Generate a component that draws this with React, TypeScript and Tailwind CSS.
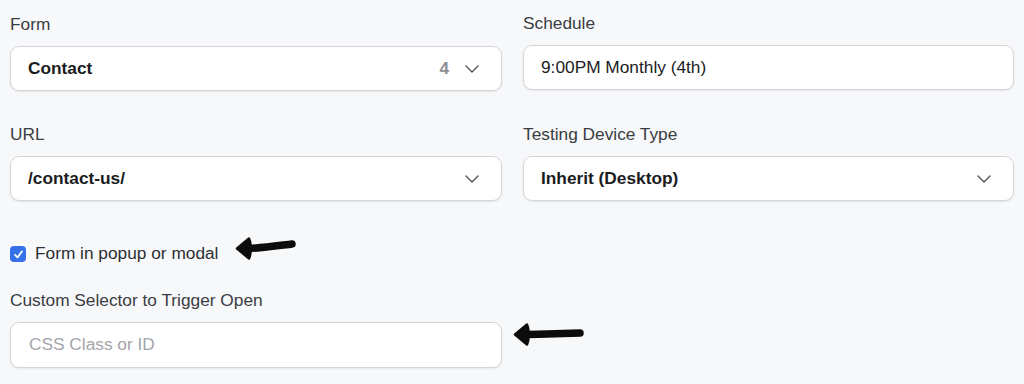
const font = { fontFamily: '"Liberation Sans", Arial, sans-serif' };

const Arrow = ({ width = 62, rise = 4 }: { width?: number; rise?: number }) => (
  <svg width={width} height="24" viewBox={`0 0 ${width} 24`} fill="none">
    <path
      d={`M13 12.5 C ${width * 0.45} 12, ${width * 0.75} ${12 - rise * 0.7}, ${width - 5} ${12 - rise}`}
      stroke="#0c0c0c"
      strokeWidth="7.5"
      strokeLinecap="round"
    />
    <path
      d="M2 12.5 L14 2.5 Q16 7 15.5 12.5 Q16 18 14 22.5 Z"
      fill="#0c0c0c"
      stroke="#0c0c0c"
      strokeWidth="2.5"
      strokeLinejoin="round"
    />
  </svg>
);

const Chevron = () => (
  <svg width="14" height="8" viewBox="0 0 14 8" fill="none">
    <path d="M1 1 L7 7 L13 1" stroke="#4a4c50" strokeWidth="1.3" strokeLinecap="round" strokeLinejoin="round" />
  </svg>
);

const Label = ({ children }: { children: React.ReactNode }) => (
  <div className="h-6 mb-[10px] text-[17.3px] leading-6 text-[#3a3d42]">{children}</div>
);

const SelectBox = ({
  value,
  count,
  bold = true,
  chevron = true,
}: {
  value: string;
  count?: string;
  bold?: boolean;
  chevron?: boolean;
}) => (
  <div className="h-[45px] flex items-center bg-white border border-[#d3d5d9] rounded-[9px] shadow-[0_1px_2px_rgba(0,0,0,0.08)] pl-[17px] pr-[22px]">
    <span className={`flex-1 text-[17.3px] text-[#1b1c1e] ${bold ? "font-bold" : ""}`}>{value}</span>
    {count && <span className="text-[17.3px] font-bold text-[#8e8f92] mr-[16px]">{count}</span>}
    {chevron && <Chevron />}
  </div>
);

export default function App() {
  return (
    <div className="w-[1024px] h-[384px] bg-[#f7f8fa] pt-3 px-[10px] overflow-hidden" style={font}>
      <div className="grid grid-cols-[492px_491px] gap-x-[21px]">
        <div>
          <Label>Form</Label>
          <SelectBox value="Contact" count="4" />
        </div>
        <div className="-mt-px">
          <Label>Schedule</Label>
          <SelectBox value="9:00PM Monthly (4th)" bold={false} chevron={false} />
        </div>
        <div className="mt-[31px]">
          <Label>URL</Label>
          <SelectBox value="/contact-us/" />
        </div>
        <div className="mt-[31px]">
          <Label>Testing Device Type</Label>
          <SelectBox value="Inherit (Desktop)" />
        </div>
      </div>

      <div className="mt-[41px] h-6 flex items-center">
        <span className="w-4 h-4 rounded-[4px] bg-[#3570e8] flex items-center justify-center">
          <svg width="11" height="11" viewBox="0 0 12 12" fill="none">
            <path d="M2.3 6.5 L4.9 9.2 L9.7 2.8" stroke="white" strokeWidth="2" strokeLinecap="round" strokeLinejoin="round" />
          </svg>
        </span>
        <span className="ml-[9px] text-[17.3px] text-[#2d2f33]">Form in popup or modal</span>
        <span className="ml-[17px] -mt-[12px]">
          <Arrow width={62} rise={4} />
        </span>
      </div>

      <div className="mt-[22px]">
        <Label>Custom Selector to Trigger Open</Label>
        <div className="flex items-center">
          <div className="w-[492px] h-[46px] flex items-center bg-white border border-[#d3d5d9] rounded-[9px] shadow-[0_1px_2px_rgba(0,0,0,0.08)] pl-[18px]">
            <span className="text-[17.3px] text-[#a3a6ab]">CSS Class or ID</span>
          </div>
          <span className="ml-[11px] -mt-[22px]">
            <Arrow width={72} rise={1} />
          </span>
        </div>
      </div>
    </div>
  );
}
